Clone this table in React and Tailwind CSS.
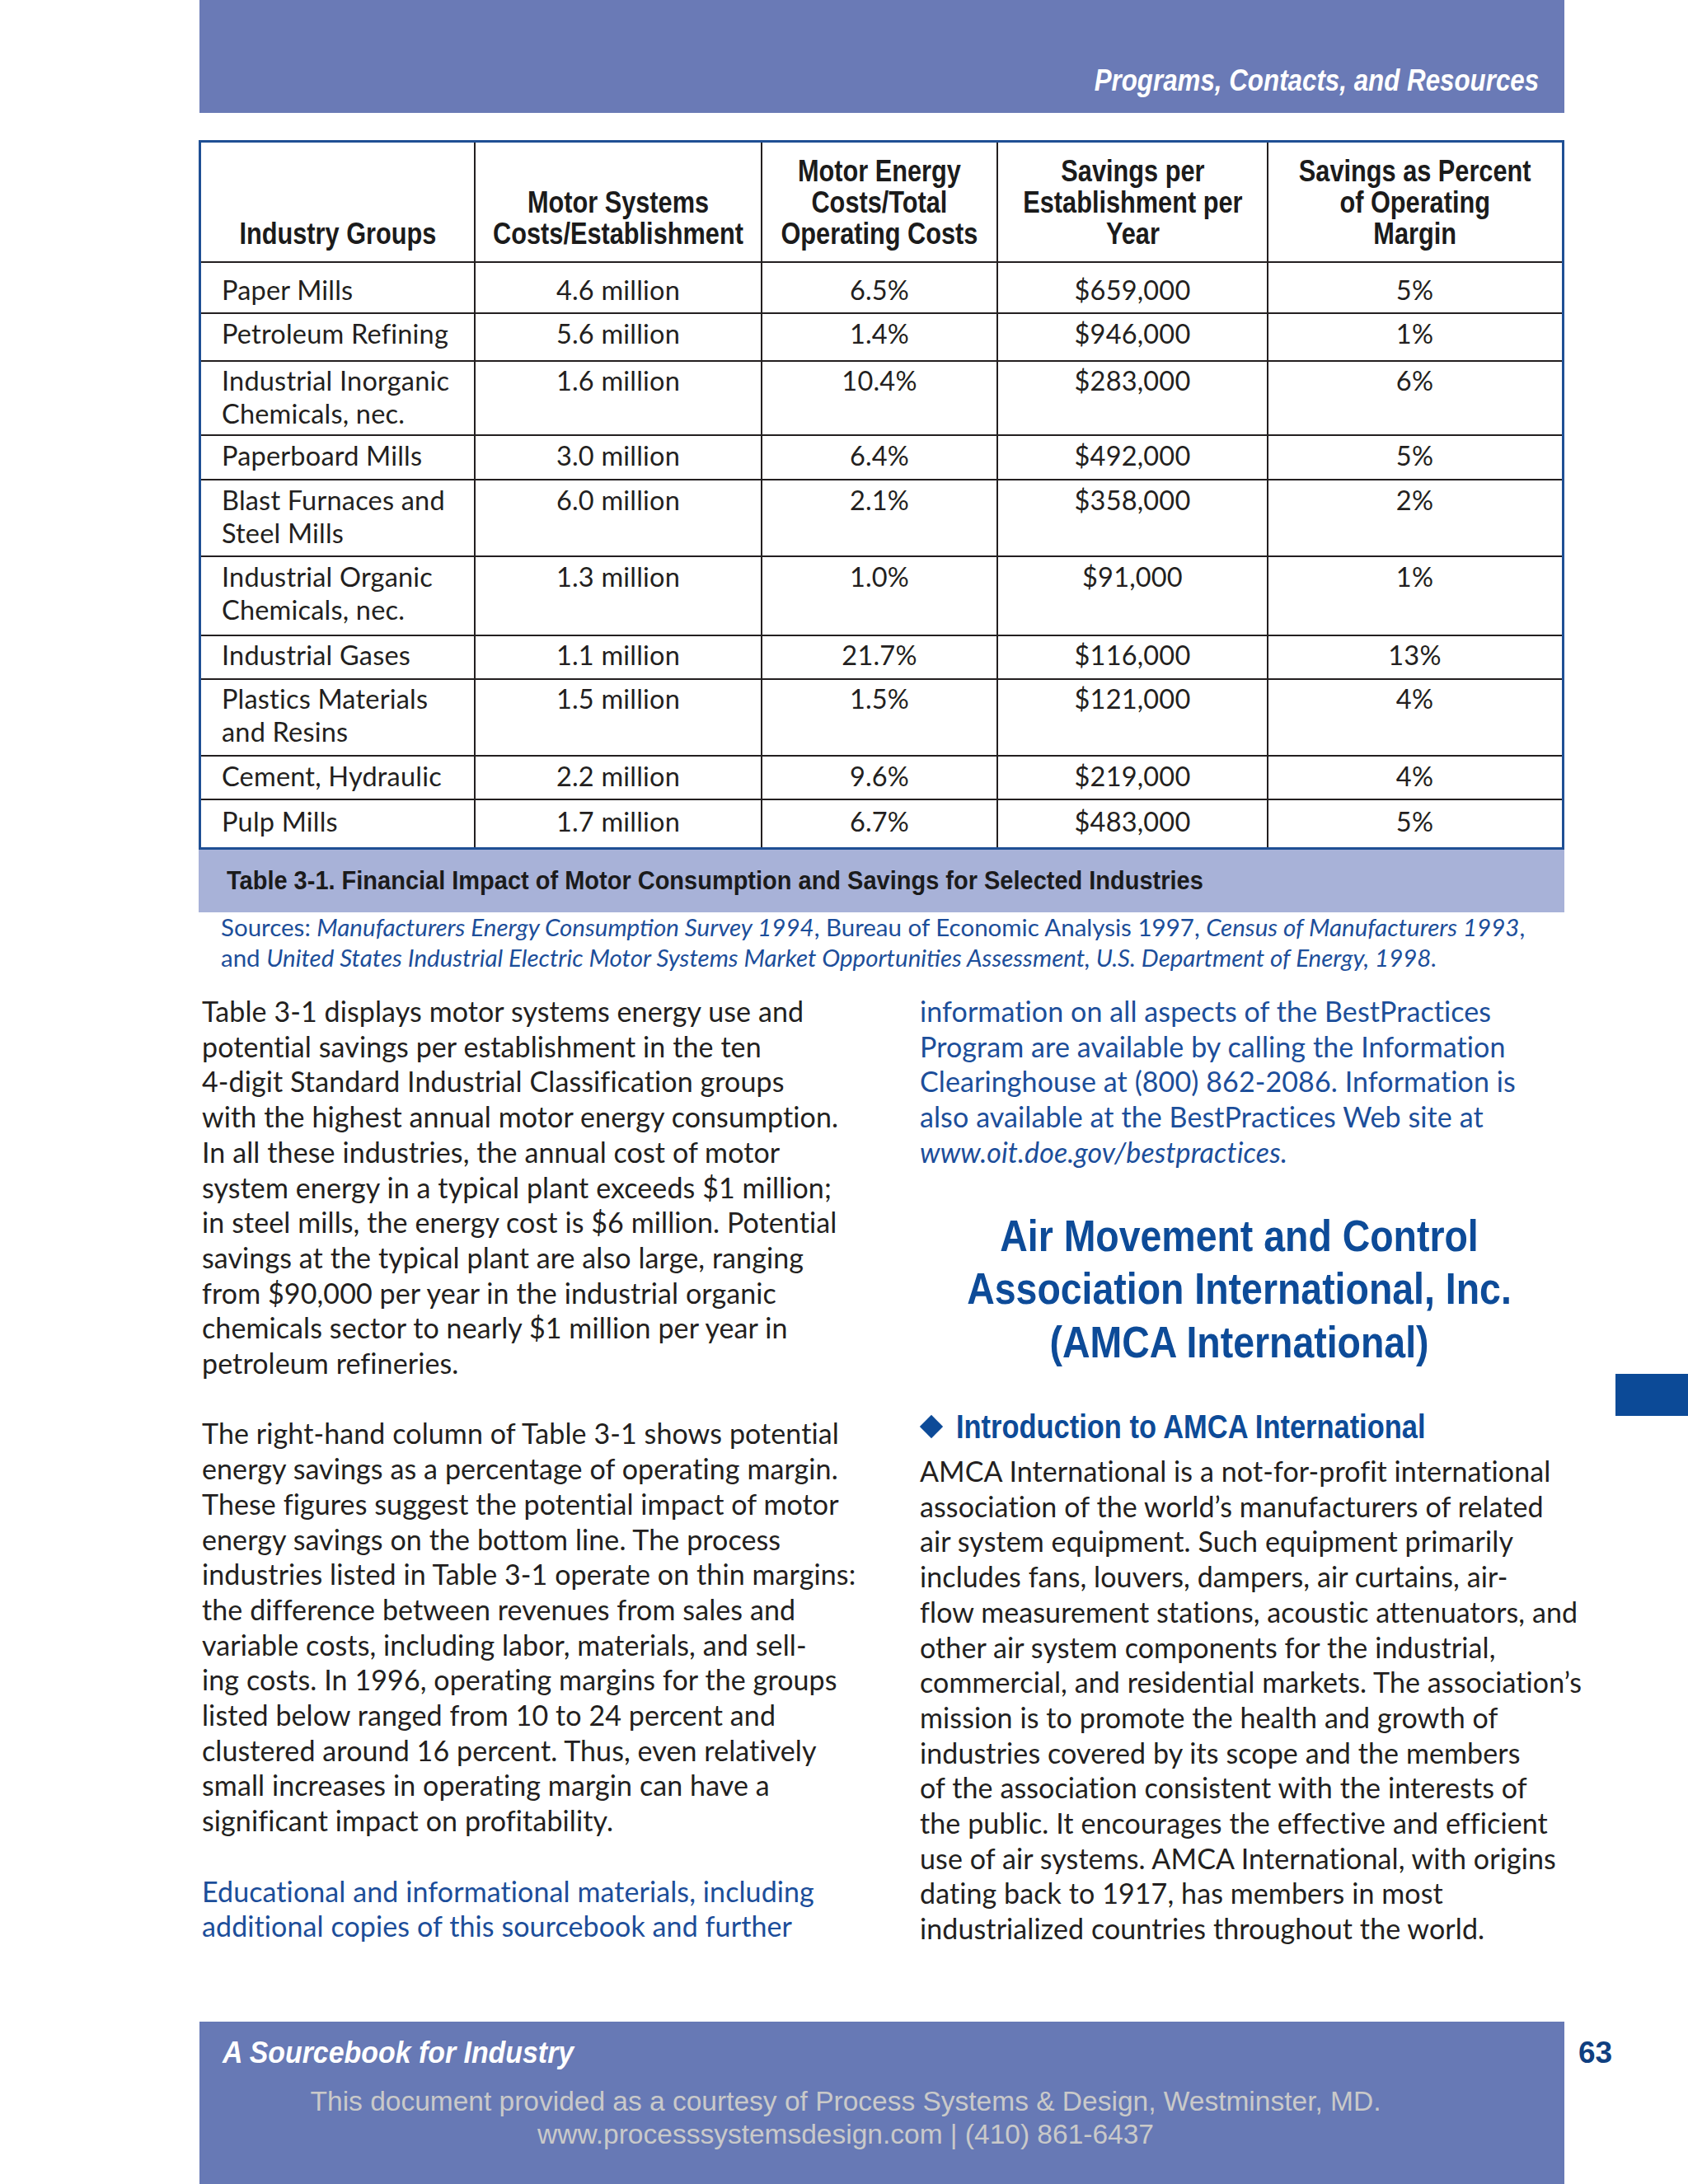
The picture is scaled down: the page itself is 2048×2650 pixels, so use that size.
const narrow = "font-['Liberation_Sans_Narrow','Arial_Narrow','Liberation_Sans',Arial,sans-serif]";
const body = "font-['Lato','Open_Sans',sans-serif]";

const headers = [
  ["Industry Groups"],
  ["Motor Systems", "Costs/Establishment"],
  ["Motor Energy", "Costs/Total", "Operating Costs"],
  ["Savings per", "Establishment per", "Year"],
  ["Savings as Percent", "of Operating", "Margin"],
];

const rows = [
  { name: ["Paper Mills"], cells: ["4.6 million", "6.5%", "$659,000", "5%"], h: "h-[60px] pt-[13px]" },
  { name: ["Petroleum Refining"], cells: ["5.6 million", "1.4%", "$946,000", "1%"], h: "h-[56px] pt-[4px]" },
  { name: ["Industrial Inorganic", "Chemicals, nec."], cells: ["1.6 million", "10.4%", "$283,000", "6%"], h: "h-[88px] pt-[3px]" },
  { name: ["Paperboard Mills"], cells: ["3.0 million", "6.4%", "$492,000", "5%"], h: "h-[52px] pt-[4px]" },
  { name: ["Blast Furnaces and", "Steel Mills"], cells: ["6.0 million", "2.1%", "$358,000", "2%"], h: "h-[91px] pt-[4px]" },
  { name: ["Industrial Organic", "Chemicals, nec."], cells: ["1.3 million", "1.0%", "$91,000", "1%"], h: "h-[94px] pt-[4px]" },
  { name: ["Industrial Gases"], cells: ["1.1 million", "21.7%", "$116,000", "13%"], h: "h-[51px] pt-[3px]" },
  { name: ["Plastics Materials", "and Resins"], cells: ["1.5 million", "1.5%", "$121,000", "4%"], h: "h-[91px] pt-[3px]" },
  { name: ["Cement, Hydraulic"], cells: ["2.2 million", "9.6%", "$219,000", "4%"], h: "h-[51px] pt-[4px]" },
  { name: ["Pulp Mills"], cells: ["1.7 million", "6.7%", "$483,000", "5%"], h: "h-[57px] pt-[6px]" },
];

const para1 = [
  "Table 3-1 displays motor systems energy use and",
  "potential savings per establishment in the ten",
  "4-digit Standard Industrial Classification groups",
  "with the highest annual motor energy consumption.",
  "In all these industries, the annual cost of motor",
  "system energy in a typical plant exceeds $1 million;",
  "in steel mills, the energy cost is $6 million. Potential",
  "savings at the typical plant are also large, ranging",
  "from $90,000 per year in the industrial organic",
  "chemicals sector to nearly $1 million per year in",
  "petroleum refineries.",
];

const para2 = [
  "The right-hand column of Table 3-1 shows potential",
  "energy savings as a percentage of operating margin.",
  "These figures suggest the potential impact of motor",
  "energy savings on the bottom line. The process",
  "industries listed in Table 3-1 operate on thin margins:",
  "the difference between revenues from sales and",
  "variable costs, including labor, materials, and sell-",
  "ing costs. In 1996, operating margins for the groups",
  "listed below ranged from 10 to 24 percent and",
  "clustered around 16 percent. Thus, even relatively",
  "small increases in operating margin can have a",
  "significant impact on profitability.",
];

const para3 = [
  "Educational and informational materials, including",
  "additional copies of this sourcebook and further",
];

const info = [
  "information on all aspects of the BestPractices",
  "Program are available by calling the Information",
  "Clearinghouse at (800) 862-2086. Information is",
  "also available at the BestPractices Web site at",
];

const amca = [
  "AMCA International is a not-for-profit international",
  "association of the world’s manufacturers of related",
  "air system equipment. Such equipment primarily",
  "includes fans, louvers, dampers, air curtains, air-",
  "flow measurement stations, acoustic attenuators, and",
  "other air system components for the industrial,",
  "commercial, and residential markets. The association’s",
  "mission is to promote the health and growth of",
  "industries covered by its scope and the members",
  "of the association consistent with the interests of",
  "the public. It encourages the effective and efficient",
  "use of air systems. AMCA International, with origins",
  "dating back to 1917, has members in most",
  "industrialized countries throughout the world.",
];

function Lines({ lines, className = "" }) {
  return (
    <div className={className}>
      {lines.map((line) => (
        <div key={line} className="whitespace-nowrap">{line}</div>
      ))}
    </div>
  );
}

function MotorTable() {
  return (
    <div className="w-[1657px] border-[3px] border-[#1f4f94]">
      <div className="grid h-[146px] grid-cols-[331px_348px_286px_328px_357px] border-b-2 border-[#231f20]">
        {headers.map((lines, i) => (
          <div
            key={i}
            className={`flex flex-col items-center justify-end pb-[14px] ${i > 0 ? "border-l-2 border-[#231f20]" : ""}`}
          >
            <div className={`flex origin-bottom scale-x-[0.83] flex-col items-center text-center ${narrow} text-[37px] font-bold leading-[38px] text-[#1b1b1b]`}>
              {lines.map((l) => (
                <div key={l} className="whitespace-nowrap">{l}</div>
              ))}
            </div>
          </div>
        ))}
      </div>
      {rows.map((row, r) => (
        <div
          key={r}
          className={`grid grid-cols-[331px_348px_286px_328px_357px] ${r < rows.length - 1 ? "border-b-2 border-[#231f20]" : ""} ${body} text-[32.5px] leading-[39.5px] tracking-[0.2px] text-[#231f20]`}
        >
          <div className={`${row.h} pl-[25px]`}>
            {row.name.map((n) => (
              <div key={n} className="whitespace-nowrap">{n}</div>
            ))}
          </div>
          {row.cells.map((c, i) => (
            <div key={i} className={`${row.h} border-l-2 border-[#231f20] text-center`}>{c}</div>
          ))}
        </div>
      ))}
    </div>
  );
}

export default function App() {
  return (
    <div className="relative flex h-[2650px] w-[2048px] flex-col overflow-hidden bg-white">
      <div className="ml-[242px] flex h-[137px] w-[1656px] items-end justify-end bg-[#6a7ab6] pb-[21px] pr-[31px]">
        <span className={`inline-block origin-right scale-x-[0.87] whitespace-nowrap ${narrow} text-[36px] font-bold italic leading-[36px] text-white`}>
          Programs, Contacts, and Resources
        </span>
      </div>

      <div className="ml-[241px] mt-[33px] w-[1657px]">
        <MotorTable />
        <div className="h-[76px] bg-[#a8b2d8] pl-[34px] pt-[22px]">
          <span className={`inline-block origin-left scale-x-[0.935] whitespace-nowrap ${narrow} text-[31px] font-bold leading-[31px] text-[#1b1b1b]`}>
            Table 3-1. Financial Impact of Motor Consumption and Savings for Selected Industries
          </span>
        </div>
        <div className={`pl-[27px] ${body} text-[29.5px] leading-[36.5px] text-[#1c4e9a]`}>
          <div className="whitespace-nowrap">
            Sources: <i>Manufacturers Energy Consumption Survey 1994</i>, Bureau of Economic Analysis 1997,{" "}
            <i>Census of Manufacturers 1993</i>,
          </div>
          <div className="whitespace-nowrap">
            and <i>United States Industrial Electric Motor Systems Market Opportunities Assessment, U.S. Department of Energy, 1998.</i>
          </div>
        </div>
      </div>

      <div className={`ml-[245px] mt-[26px] flex ${body} text-[34px] leading-[42.7px] tracking-[0.1px] text-[#231f20]`}>
        <div className="w-[871px]">
          <Lines lines={para1} />
          <Lines lines={para2} className="mt-[42.7px]" />
          <Lines lines={para3} className="mt-[42.7px] text-[#1c4e9a]" />
        </div>

        <div className="w-[775px]">
          <div className="text-[#1c4e9a]">
            <Lines lines={info} />
            <div className="italic">www.oit.doe.gov/bestpractices.</div>
          </div>

          <div className={`mt-[47px] origin-center scale-x-[0.86] whitespace-nowrap text-center ${narrow} text-[54px] font-bold leading-[64.5px] tracking-normal text-[#0d4b98]`}>
            <div>Air Movement and Control</div>
            <div>Association International, Inc.</div>
            <div>(AMCA International)</div>
          </div>

          <div className={`mt-[47px] flex h-[48px] items-center ${narrow} text-[41px] font-bold leading-[48px] tracking-normal text-[#0d4b98]`}>
            <span className="ml-[4px] h-[20px] w-[20px] shrink-0 rotate-45 bg-[#0d4b98]" />
            <span className="ml-[20px] inline-block origin-left scale-x-[0.84] whitespace-nowrap">Introduction to AMCA International</span>
          </div>

          <Lines lines={amca} className="mt-[9px]" />
        </div>

        <div className="ml-[69px] mt-[461px] h-[51px] w-[88px] shrink-0 bg-[#0c4a97]" />
      </div>

      <div className="mt-auto flex">
        <div className="ml-[242px] h-[197px] w-[1656px] bg-[#6779b5] pt-[19px]">
          <div className="pl-[28px]">
            <span className={`inline-block origin-left scale-x-[0.916] whitespace-nowrap ${narrow} text-[37px] font-bold italic leading-[37px] text-white`}>
              A Sourcebook for Industry
            </span>
          </div>
          <div className="mt-[21px] pr-[88px] text-center font-['Liberation_Sans',Arial,sans-serif] text-[33.5px] leading-[39.5px] text-[#c9c9c9]">
            <div>This document provided as a courtesy of Process Systems &amp; Design, Westminster, MD.</div>
            <div>www.processsystemsdesign.com | (410) 861-6437</div>
          </div>
        </div>
        <div className={`ml-[17px] pt-[19px] ${narrow} text-[37px] font-bold leading-[37px] text-[#0f3f80]`}>63</div>
      </div>
    </div>
  );
}
